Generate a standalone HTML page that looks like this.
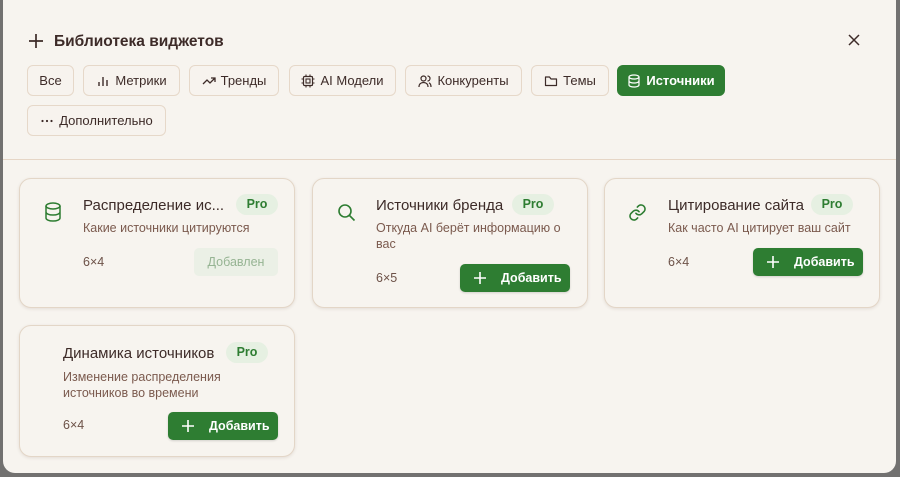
<!DOCTYPE html>
<html><head><meta charset="utf-8"><style>
*{box-sizing:border-box;margin:0;padding:0}
body{width:900px;height:477px;background:#727170;position:relative;overflow:hidden;font-family:"Liberation Sans","DejaVu Sans",sans-serif}
.modal{position:absolute;left:3px;top:-12px;width:893px;height:485px;background:#f7f4ef;border-radius:12px}
.abs{position:absolute}
.title{left:54px;top:33px;font-size:15.5px;font-weight:bold;color:#3d2b28}
.chip{position:absolute;height:31px;border:1px solid #e6d8c9;border-radius:6px;background:#f7f3ee;font-size:13px;color:#3d2b28;display:flex;align-items:center;justify-content:center;gap:5px}
.chip.on{background:#2e7d32;border-color:#2e7d32;color:#fff;font-weight:bold}
.chip svg{width:14px;height:14px}
.div{left:3px;top:159px;width:893px;height:1px;background:#e6d6c6}
.card{position:absolute;border:1px solid #e3d6c7;border-radius:12px;background:#f7f4ef;box-shadow:0 1px 3px rgba(90,60,40,.12)}
.ct{position:absolute;font-size:15px;color:#3d2b28;white-space:nowrap}
.pro{position:absolute;height:21px;width:42px;border-radius:11px;background:#e6f0e2;color:#2e7d32;font-weight:bold;font-size:12.5px;text-align:center;line-height:21px}
.cd{position:absolute;font-size:12.5px;color:#7b5a4e;line-height:16px}
.sz{position:absolute;font-size:12.5px;color:#6d5248}
.btn{position:absolute;width:110px;height:28px;border-radius:5px;background:#2e7d32;color:#fff;font-weight:bold;font-size:12.5px;line-height:28px;box-shadow:0 1px 2px rgba(0,0,0,.15)}
.btn span{position:absolute;left:41px}
.btn svg{position:absolute;left:14px;top:8px}
.added{position:absolute;width:84px;height:28px;border-radius:5px;background:#ebf0e6;color:#96b493;font-size:12.5px;text-align:center;line-height:28px}
</style></head><body>
<div class="modal"></div>
<svg class="abs" style="left:28px;top:33px" width="16" height="16" viewBox="0 0 16 16"><path d="M8 1v14M1 8h14" stroke="#3d2b28" stroke-width="1.7"/></svg>
<div class="abs title">Библиотека виджетов</div>
<svg class="abs" style="left:848px;top:34px" width="12" height="12" viewBox="0 0 12 12"><path d="M1 1l10 10M11 1L1 11" stroke="#3d2b28" stroke-width="1.5"/></svg>

<div class="chip" style="left:27px;top:65px;width:47px">Все</div>
<div class="chip" style="left:83px;top:65px;width:97px"><svg viewBox="0 0 14 14"><path d="M3 12V8M7 12V3M11 12V6" stroke="#3d2b28" stroke-width="1.4"/></svg>Метрики</div>
<div class="chip" style="left:189px;top:65px;width:90px"><svg viewBox="0 0 14 14"><path d="M1 10l4-4 3 3 5-5M9 4h4v4" stroke="#3d2b28" stroke-width="1.3" fill="none"/></svg>Тренды</div>
<div class="chip" style="left:289px;top:65px;width:107px"><svg viewBox="0 0 14 14"><rect x="2.5" y="2.5" width="9" height="9" rx="1" stroke="#3d2b28" stroke-width="1.2" fill="none"/><rect x="5" y="5" width="4" height="4" stroke="#3d2b28" stroke-width="1.1" fill="none"/><path d="M5 0.5v2M9 0.5v2M5 11.5v2M9 11.5v2M0.5 5h2M0.5 9h2M11.5 5h2M11.5 9h2" stroke="#3d2b28" stroke-width="1.1"/></svg>AI Модели</div>
<div class="chip" style="left:405px;top:65px;width:117px"><svg viewBox="0 0 14 14"><circle cx="5.5" cy="4.5" r="2.5" stroke="#3d2b28" stroke-width="1.2" fill="none"/><path d="M1 13c0-3 2-4.5 4.5-4.5S10 10 10 13M9.5 2a2.5 2.5 0 010 5M11 8.8c1.3.6 2 2 2 4.2" stroke="#3d2b28" stroke-width="1.2" fill="none"/></svg>Конкуренты</div>
<div class="chip" style="left:531px;top:65px;width:78px"><svg viewBox="0 0 14 14"><path d="M1.5 3.5v8h11v-6.5H7L5.5 3h-4z" stroke="#3d2b28" stroke-width="1.2" fill="none" stroke-linejoin="round"/></svg>Темы</div>
<div class="chip on" style="left:617px;top:65px;width:108px"><svg viewBox="0 0 14 14"><ellipse cx="7" cy="3" rx="5" ry="2" stroke="#fff" stroke-width="1.2" fill="none"/><path d="M2 3v8c0 1.1 2.2 2 5 2s5-.9 5-2V3M2 7c0 1.1 2.2 2 5 2s5-.9 5-2" stroke="#fff" stroke-width="1.2" fill="none"/></svg>Источники</div>
<div class="chip" style="left:27px;top:105px;width:139px"><svg viewBox="0 0 14 14"><circle cx="2.5" cy="7" r="1.1" fill="#3d2b28"/><circle cx="7" cy="7" r="1.1" fill="#3d2b28"/><circle cx="11.5" cy="7" r="1.1" fill="#3d2b28"/></svg>Дополнительно</div>
<div class="abs div"></div>

<!-- card 1 -->
<div class="card" style="left:19px;top:178px;width:276px;height:130px"></div>
<svg class="abs" style="left:44px;top:202px" width="18" height="20" viewBox="0 0 18 20"><ellipse cx="9" cy="4" rx="7" ry="3" stroke="#2e7d32" stroke-width="1.5" fill="none"/><path d="M2 4v12c0 1.7 3.1 3 7 3s7-1.3 7-3V4M2 10c0 1.7 3.1 3 7 3s7-1.3 7-3" stroke="#2e7d32" stroke-width="1.5" fill="none"/></svg>
<div class="ct" style="left:83px;top:197px">Распределение ис...</div>
<div class="pro" style="left:236px;top:194px">Pro</div>
<div class="cd" style="left:83px;top:220px">Какие источники цитируются</div>
<div class="sz" style="left:83px;top:255px">6×4</div>
<div class="added" style="left:194px;top:248px">Добавлен</div>

<!-- card 2 -->
<div class="card" style="left:312px;top:178px;width:276px;height:130px"></div>
<svg class="abs" style="left:337px;top:203px" width="19" height="19" viewBox="0 0 19 19"><circle cx="8" cy="8" r="6" stroke="#2e7d32" stroke-width="1.6" fill="none"/><path d="M12.5 12.5l5 5" stroke="#2e7d32" stroke-width="1.6"/></svg>
<div class="ct" style="left:376px;top:197px">Источники бренда</div>
<div class="pro" style="left:512px;top:194px">Pro</div>
<div class="cd" style="left:376px;top:220px;width:200px">Откуда AI берёт информацию о вас</div>
<div class="sz" style="left:376px;top:271px">6×5</div>
<div class="btn" style="left:460px;top:264px"><svg width="12" height="12" viewBox="0 0 12 12"><path d="M6 0v12M0 6h12" stroke="#fff" stroke-width="1.6"/></svg><span>Добавить</span></div>

<!-- card 3 -->
<div class="card" style="left:604px;top:178px;width:276px;height:130px"></div>
<svg class="abs" style="left:628px;top:203px" width="19" height="19" viewBox="0 0 24 24"><path d="M10 13a5 5 0 007.5.5l3-3a5 5 0 00-7-7l-1.7 1.7M14 11a5 5 0 00-7.5-.5l-3 3a5 5 0 007 7l1.7-1.7" stroke="#2e7d32" stroke-width="2" fill="none" stroke-linecap="round"/></svg>
<div class="ct" style="left:668px;top:197px">Цитирование сайта</div>
<div class="pro" style="left:811px;top:194px">Pro</div>
<div class="cd" style="left:668px;top:220px">Как часто AI цитирует ваш сайт</div>
<div class="sz" style="left:668px;top:255px">6×4</div>
<div class="btn" style="left:753px;top:248px"><svg width="12" height="12" viewBox="0 0 12 12"><path d="M6 0v12M0 6h12" stroke="#fff" stroke-width="1.6"/></svg><span>Добавить</span></div>

<!-- card 4 -->
<div class="card" style="left:19px;top:325px;width:276px;height:132px"></div>
<div class="ct" style="left:63px;top:345px">Динамика источников</div>
<div class="pro" style="left:226px;top:342px">Pro</div>
<div class="cd" style="left:63px;top:369px;width:200px">Изменение распределения источников во времени</div>
<div class="sz" style="left:63px;top:418px">6×4</div>
<div class="btn" style="left:168px;top:412px"><svg width="12" height="12" viewBox="0 0 12 12"><path d="M6 0v12M0 6h12" stroke="#fff" stroke-width="1.6"/></svg><span>Добавить</span></div>
</body></html>
